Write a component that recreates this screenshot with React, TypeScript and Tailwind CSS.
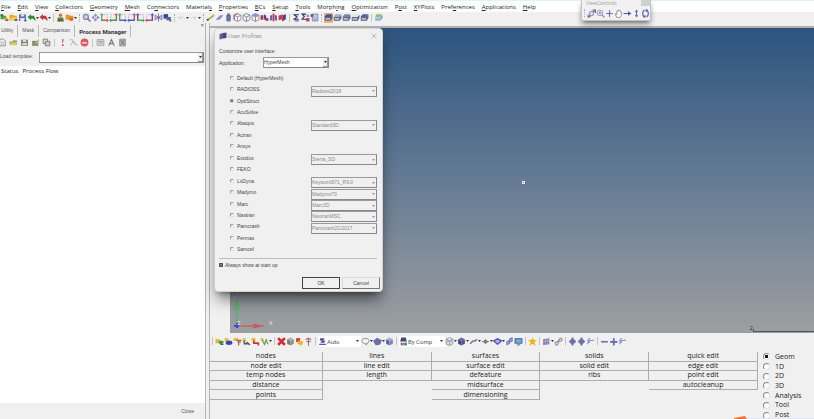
import React, { useState } from 'react';
import clsx from 'clsx';

const menus = [
  'File', 'Edit', 'View', 'Collectors', 'Geometry', 'Mesh', 'Connectors', 'Materials', 'Properties', 'BCs',
  'Setup', 'Tools', 'Morphing', 'Optimization', 'Post', 'XYPlots', 'Preferences', 'Applications', 'Help',
];

// letter that carries the keyboard shortcut, when it is not the first one
const accessKeys: Record<string, number> = { Connectors: 2, Materials: 8, Morphing: 5, Post: 1, Preferences: 4 };

const cube = (top: string, left: string, right: string) => (
  <>
    <path d="M8 1l6 3-6 3-6-3z" fill={top} />
    <path d="M2 4l6 3v8l-6-3z" fill={left} />
    <path d="M14 4L8 7v8l6-3z" fill={right} />
  </>
);

const wire = (color: string, mark?: string) => (
  <>
    <path d="M8 1l6 3v8l-6 3-6-3V4zM2 4l6 3 6-3M8 7v8" fill="#f6f6fa" stroke={color} strokeWidth="1.5" />
    {mark && <path d="M8 1L2 4v8" fill="none" stroke={mark} strokeWidth="2" />}
  </>
);

const axes = (a: string, b: string, flip?: boolean) => (
  <g fill="none" strokeWidth="2.5" transform={flip ? 'translate(16 0) scale(-1 1)' : undefined}>
    <path d="M3 2v12M1 4l2-2 2 2" stroke={a} />
    <path d="M3 13h11M12 11l2 2-2 2" stroke={b} />
    <path d="M6 3h7v6" stroke="#b9a0c8" strokeWidth="1.5" strokeDasharray="3 2" />
  </g>
);

const layers = (color: string) => (
  <>
    <path d="M1 6l4-4h10l-3 5H2z" fill={color} />
    <path d="M2 8h10v5H2z" fill="#b9bccb" stroke="#4c5378" strokeWidth="1.5" />
    <path d="M12 7l3-4v6l-3 4z" fill="#555d88" />
  </>
);

const comp = (a: string, b: string) => (
  <>
    <path d="M1 3h5l1 2h4v6H1z" fill={a} />
    <path d="M6 10l4-3 5 3-4 4z" fill={b} />
    <path d="M10 12h5v2h-5z" fill="#3b4273" />
  </>
);

const icons: Record<string, React.ReactNode> = {
  model: <>{comp('#4da04b', '#e6a325')}<path d="M1 2h4v4H1z" fill="#24803b" /></>,
  open: <><path d="M1 3h6l2 2h5v8H1z" fill="#e8a52b" /><path d="M4 7h11l-3 6H2z" fill="#f6c944" /><path d="M10 11h5v3h-5z" fill="#3f4d91" /></>,
  save: <><path d="M2 2h11l1 2v10H2z" fill="#5e68a7" /><path d="M5 2h6v4H5zM4 9h8v5H4z" fill="#e3e5f2" /><path d="M11 12h4v3h-4z" fill="#4b5798" /></>,
  import: <path d="M1 7l6-5v3h5l3 5v4l-4-4H7v3z" fill="#2d8a35" />,
  export: <path d="M1 7l6-5v3h5l3 5v4l-4-4H7v3z" fill="#c33432" />,
  user: <><circle cx="8" cy="4" r="3" fill="#c67a28" /><path d="M3 8h10v4H3z" fill="#448d3e" /><path d="M3 11h10l1 4H2z" fill="#6c5432" /></>,
  folder: <><path d="M1 3h6l2 2h6v7H1z" fill="#e39a2b" /><path d="M8 8h6v6H8z" fill="#e7672a" /></>,
  find: <><circle cx="7" cy="7" r="4.5" fill="#c9cce2" stroke="#84879d" strokeWidth="2" /><path d="M10 10l5 5" stroke="#6d708b" strokeWidth="2.5" /></>,
  center: <path d="M8 1l3 3-3 3-3-3zM8 9l3 3-3 3-3-3zM1 8l3-3 3 3-3 3zM9 8l3-3 3 3-3 3z" fill="#8e90cd" />,
  axGR: axes('#4eb657', '#d15460'),
  axGRf: axes('#cc5866', '#3da34b', true),
  axGB: axes('#42b352', '#5b5bc4'),
  axRB: axes('#c4505f', '#5656c4', true),
  axBG: axes('#5151c7', '#47af55'),
  axBR: axes('#574fc4', '#c74b62', true),
  iso: <><path d="M8 1v14M2 4l6 4 6-4M2 12l6-4 6 4M2 4v8M14 4v8" fill="none" stroke="#5a62ad" strokeWidth="1.5" /><path d="M5 8h6" stroke="#c14c5c" strokeWidth="2" /></>,
  views: <><path d="M1 2h8v8H1z" fill="#374983" /><path d="M6 7h8v6H6z" fill="#4769b0" /><path d="M11 12h4v3h-4z" fill="#c74040" /></>,
  undo: <path d="M2 8l4-4v3c4-1 7 0 8 5-2-3-4-3-8-2v3z" fill="#d9d9df" />,
  redo: <path d="M14 8l-4-4v3c-4-1-7 0-8 5 2-3 4-3 8-2v3z" fill="#d9d9df" />,
  lineY: <><path d="M2 13L14 4" stroke="#a2b038" strokeWidth="3" /><circle cx="3" cy="12" r="2" fill="#555" /><circle cx="13" cy="4" r="2" fill="#d2c425" /></>,
  plate: <path d="M1 12L9 4h6l-7 8z" fill="#8b8fc9" />,
  tank: <><rect x="4" y="3" width="8" height="12" rx="2" fill="#6b70a5" /><path d="M6 1h4v3H6z" fill="#4d5287" /></>,
  wireR: wire('#8a8a92', '#c55656'),
  wire: wire('#7d7e88'),
  wireB: <>{wire('#7b7da0')}<path d="M8 1l6 3-6 3-6-3z" fill="#8b92d8" /></>,
  solidR: <><path d="M1 4h5v8H1z" fill="#b63442" /><path d="M7 2l4 3v8l-4-2z" fill="#414791" /><path d="M10 9h5v5h-5z" fill="#c2323c" /></>,
  mirror: <><path d="M2 5l4-2v9l-4 2zM14 5l-4-2v9l4 2z" fill="#5b5fab" /><path d="M8 1v14" stroke="#cd3d44" strokeWidth="3" /></>,
  cubeR: <><path d="M1 5l7-3v9l-7 2z" fill="#cf3a46" /><path d="M8 4l6-2v9l-6 3z" fill="#414791" /><path d="M7 10l4-2v5l-4 2z" fill="#c2323c" /></>,
  sum: <><path d="M12 3H4l5 4-5 4h8" fill="none" stroke="#2f3566" strokeWidth="2" /><path d="M5 13h7v2H5z" fill="#5a62a9" /></>,
  sumR: <><path d="M9 2H2l4 4-4 5h7" fill="none" stroke="#2f3566" strokeWidth="2" /><path d="M9 9h6v6H9z" fill="#c14448" /><path d="M10 3h4v4h-4z" fill="#8288b8" /></>,
  report: <><path d="M4 2h10v12H4z" fill="#c8cbe2" stroke="#777db0" strokeWidth="1.5" /><path d="M1 2h5v5H1z" fill="#565c98" /><path d="M6 9h6M6 12h6" stroke="#777db0" /></>,
  layerA: layers('#3e5496'),
  layerB: layers('#a7abc2'),
  layerC: layers('#7b82ae'),
  layerD: layers('#e1e2ea'),
  layerE: layers('#50619d'),
  layerG: <><path d="M4 2h10l-2 5H2z" fill="#8ac56b" /><path d="M2 8h10v6H2z" fill="#9bb9dc" /><path d="M12 7l3-4v6l-3 4z" fill="#7390bd" /></>,
  zoomBox: <><path d="M3 14L13 4M2 10v4h4M10 2h5v5" fill="none" stroke="#666a85" strokeWidth="2" /><circle cx="8" cy="8" r="4" fill="#d9daee" stroke="#7b7eae" strokeWidth="1.5" /></>,
  zoomIn: <><circle cx="7" cy="7" r="5" fill="#e4e4f4" stroke="#8d8fae" strokeWidth="1.5" /><circle cx="7" cy="7" r="2" fill="#8d8fc0" /><path d="M11 11l4 4" stroke="#7779ac" strokeWidth="2" /></>,
  plusThin: <path d="M8 2v12M2 8h12" stroke="#6d6fb0" strokeWidth="2" />,
  hand: <path d="M5 15l-3-6 2-1 1 2V4h2v-2h2v1h2v2h2v6l-2 4z" fill="#fff" stroke="#85859a" strokeWidth="1.5" />,
  right: <path d="M1 7h8V4l6 4-6 4V9H1z" fill="#5257ad" />,
  updown: <path d="M8 1l3 4H9v6h2l-3 4-3-4h2V5H5z" fill="#6064bb" />,
  spin: <path d="M6 2C2 4 2 12 6 14M4 14h3v-3M10 2c4 2 4 10 0 12M12 2H9v3" fill="none" stroke="#4d52ae" strokeWidth="2" />,
  page: <><path d="M3 2h7l3 3v9H3z" fill="#eee" stroke="#8c8c8c" strokeWidth="1.5" /><path d="M5 8h6M5 11h6" stroke="#999" /></>,
  openS: <><path d="M1 6h5l1-2h7v8H1z" fill="#a2a184" /><path d="M4 8h11l-3 5H2z" fill="#d8cf59" /></>,
  saveS: <><path d="M2 3h12v11H2z" fill="#7c7e76" /><path d="M5 3h6v4H5zM4 9h8v4H4z" fill="#deded8" /></>,
  saveAs: <><path d="M2 5h11v9H2z" fill="#8c8e78" /><path d="M7 10l6-8 2 2-6 7z" fill="#c5bd50" /></>,
  copy: <><path d="M2 2h8v8H2z" fill="#ddd" stroke="#777" strokeWidth="1.5" /><path d="M6 6h8v8H6z" fill="#ccc" stroke="#777" strokeWidth="1.5" /></>,
  bang: <path d="M7 2h3l-1 7H8zM7 11h3v3H7z" fill="#d34a4f" />,
  steps: <path d="M2 3h4v4h4v4h4v3M3 13l5-7" fill="none" stroke="#a9a9bd" strokeWidth="1.5" />,
  stop: <><circle cx="8" cy="8" r="7" fill="#d95a5f" /><path d="M4 7h8v3H4z" fill="#f6dada" /></>,
  sheet: <><path d="M2 3h12v10H2z" fill="#e4e4e4" stroke="#999" strokeWidth="1.5" /><path d="M4 6h8M4 9h8" stroke="#888" strokeWidth="1.5" /></>,
  letter: <path d="M3 14L8 3l5 11M5 10h6" fill="none" stroke="#777" strokeWidth="2" />,
  pageX: <><path d="M3 2h10v12H3z" fill="#bbb" stroke="#888" strokeWidth="1.5" /><path d="M5 4l6 8M11 4l-6 8" stroke="#555" strokeWidth="1.5" /></>,
  compG: <>{comp('#e3bb24', '#48a54a')}<path d="M7 7h8v4H7z" fill="#3e9448" /></>,
  compB: <><path d="M1 2h7v6H1z" fill="#e9c02d" /><ellipse cx="9" cy="10" rx="6" ry="4" fill="#3748b5" /></>,
  compT: <><path d="M1 2h8v5H1z" fill="#efb62b" /><path d="M6 6h9M8 9h6M10 6v9" stroke="#a8603d" strokeWidth="2" /></>,
  compL: <><path d="M1 2h6v6H1z" fill="#e9c44a" /><path d="M4 6v6h9M8 9l6 5" fill="none" stroke="#575a5e" strokeWidth="2.5" /></>,
  compR: <><path d="M1 2h7v5H1z" fill="#eeb92a" /><path d="M5 6v5h8v4" fill="none" stroke="#ce382a" strokeWidth="3" /></>,
  compS: <><path d="M1 2h5v5H1z" fill="#e4c239" /><path d="M4 5l4 8 3-8 3 8" fill="none" stroke="#5f9a3b" strokeWidth="2" /></>,
  delete: <path d="M2 2l12 12M14 2L2 14" stroke="#d42b30" strokeWidth="5" />,
  gray: cube('#adadad', '#777', '#8f8f8f'),
  card: <><path d="M2 2h7v7H2z" fill="#d63b2a" /><path d="M6 6l9 2-3 7-8-3z" fill="#eeb32c" /></>,
  renum: <path d="M8 15V3M3 5l5-3 5 3M4 8h8" fill="none" stroke="#a36b6b" strokeWidth="2" />,
  auto: <><path d="M4 2h8l-3 4h4l-2 4H4l3-4H3z" fill="#46508f" /><path d="M2 12h12v2H2z" fill="#3c4583" /></>,
  balloon: <path d="M4 3h8l3 4-3 4H9l1 3-4-3H4L1 7z" fill="#fafafa" stroke="#7a7a86" strokeWidth="1.5" />,
  shade: <path d="M1 7l6-5 8 4-3 7-7 1z" fill="#6a70ae" stroke="#454b8c" />,
  cubeB: cube('#a9aed8', '#5d649e', '#8188bf'),
  byComp: <><path d="M4 1h8l2 7H2z" fill="#3f477f" /><path d="M3 10h3v5H3z" fill="#d9433c" /><path d="M6 10h4v5H6z" fill="#4cab48" /><path d="M10 10h4v5h-4z" fill="#4969cd" /></>,
  wireG: <>{wire('#90909a')}<path d="M2 8h12M5 2v12M11 2v12" stroke="#9a9aa4" /></>,
  cubeD: cube('#666ba4', '#3f4580', '#4d538f'),
  elem1: <path d="M2 12l5-5h4l3-3" fill="none" stroke="#76767c" strokeWidth="2.5" />,
  elem2: <path d="M1 8l5-2 2-3 2 3 5 2-5 2-2 3-2-3z" fill="#77777f" />,
  elem3: <path d="M1 7l7-4 7 4-7 6z" fill="#aaaef0" stroke="#4145b7" strokeWidth="2" />,
  elem4: <path d="M3 14V8l5-2v6zM8 9V3l5-2v7z" fill="#8f94cf" stroke="#585ea5" />,
  monitor: <><path d="M1 2h14v10H1z" fill="#476c9b" /><path d="M3 4h10v6H3z" fill="#65b2df" /><path d="M5 13h6v2H5z" fill="#777" /></>,
  star: <path d="M8 0l2 5.500h6l-4.500 3.500 2 7-5.500-4-5.500 4 2-7L0 5.500h6z" fill="#f1b51c" />,
  mesh: <><path d="M2 4l11-2v11L2 14z" fill="#7378a8" /><path d="M2 8l11-1M6 3v11M10 2v12" stroke="#d1d3e6" /></>,
  link: <path d="M2 10l4-2 2 2-2 4H3zM8 6l3-4 3 1v3l-4 2zM6 10l4-4" fill="none" stroke="#96969f" strokeWidth="2" />,
  globe: <><circle cx="8" cy="8" r="5" fill="#8a8ec0" /><path d="M8 1v14M2 8h12" stroke="#6268a2" strokeWidth="3" /></>,
  arc: <path d="M3 13C3 7 7 5 14 6M7 2L3 6l4 4" fill="none" stroke="#8488cc" strokeWidth="2" />,
  minus: <path d="M2 7h12v3H2z" fill="#7276b1" />,
  plus: <path d="M7 2h3v5h5v3h-5v5H7v-5H2V7h5z" fill="#6266ac" />,
};

// '|' is a divider, ':' a drag grip, 'v' a drop-down arrow
const fileBar = 'model open save import v export v | user folder v : find center axGR axGRf axGB axRB axBG axBR iso views : undo v redo v : lineY plate tank wireR wire wireB solidR mirror cubeR | sum sumR report : layerA layerB layerC layerD layerE | layerG';
const processBar = 'page openS saveS saveAs copy | bang steps stop | sheet letter pageX';
const viewBar = ': zoomBox zoomIn plusThin hand right updown spin';

const columns = [
  ['nodes', 'node edit', 'temp nodes', 'distance', 'points'],
  ['lines', 'line edit', 'length'],
  ['surfaces', 'surface edit', 'defeature', 'midsurface', 'dimensioning'],
  ['solids', 'solid edit', 'ribs'],
  ['quick edit', 'edge edit', 'point edit', 'autocleanup'],
];

const pages = ['Geom', '1D', '2D', '3D', 'Analysis', 'Tool', 'Post'];

const profiles: { name: string; version?: string }[] = [
  { name: 'Default (HyperMesh)' },
  { name: 'RADIOSS', version: 'Radioss2018' },
  { name: 'OptiStruct' },
  { name: 'AcuSolve' },
  { name: 'Abaqus', version: 'Standard3D' },
  { name: 'Actran' },
  { name: 'Ansys' },
  { name: 'Exodus', version: 'Sierra_SD' },
  { name: 'FEKO' },
  { name: 'LsDyna', version: 'Keyword971_R9.0' },
  { name: 'Madymo', version: 'Madymo70' },
  { name: 'Marc', version: 'Marc3D' },
  { name: 'Nastran', version: 'NastranMSC' },
  { name: 'Pamcrash', version: 'Pamcrash2G2017' },
  { name: 'Permas' },
  { name: 'Samcef' },
];

function Icon({ name }: { name: string }) {
  return (
    <svg viewBox="0 0 16 16" className="h-[9px] w-[9px] shrink-0" aria-hidden="true">
      {icons[name]}
    </svg>
  );
}

function Caret({ muted }: { muted?: boolean }) {
  return (
    <svg viewBox="0 0 6 4" className="h-[2px] w-[3px] shrink-0" aria-hidden="true">
      <path d="M0 0h6L3 4z" fill={muted ? '#999' : '#333'} />
    </svg>
  );
}

function Tools({ items, wide }: { items: string; wide?: boolean }) {
  return (
    <div className="flex items-center">
      {items.split(' ').map((item, i) => {
        if (item === '|') return <span key={i} className="mx-[2px] h-2 w-px bg-[#c4c4c4]" />;
        if (item === ':') return <span key={i} className="mx-[2px] h-2 border-l border-dotted border-[#a8a8a8]" />;
        if (item === 'v') return <span key={i} className="flex w-[3px]"><Caret /></span>;
        return (
          <button
            key={i}
            type="button"
            aria-label={item}
            className={clsx('flex h-[10px] items-center justify-center', wide ? 'w-[11px]' : 'w-[9px]', item === 'layerA' && 'bg-[#f3b27c]')}
          >
            <Icon name={item} />
          </button>
        );
      })}
    </div>
  );
}

function Select({ label, value, disabled, className }: { label: string; value: string; disabled?: boolean; className?: string }) {
  return (
    <div className={clsx('relative flex h-[11px] border border-[#9a9a9a] border-r-[#888] border-b-[#888]', disabled ? 'bg-[#f0f0f0]' : 'bg-white', className)}>
      <select
        aria-label={label}
        disabled={disabled}
        className={clsx('w-full appearance-none bg-transparent leading-[9px] opacity-100 outline-none', disabled ? 'text-[#8a8a8a]' : 'text-[#444]')}
      >
        <option>{value}</option>
      </select>
      <span className={clsx('pointer-events-none absolute inset-y-0 right-0 flex w-[5px] items-center justify-center bg-[#f0f0f0]', !disabled && 'border-r border-b border-[#999]')}>
        <Caret muted={disabled} />
      </span>
    </div>
  );
}

function DisplaySelect({ icon, value, className }: { icon: string; value: string; className: string }) {
  return (
    <div className={clsx('flex h-[11px] items-center bg-white pr-[2px]', className)}>
      <Icon name={icon} />
      <select aria-label={value} className="min-w-0 flex-1 appearance-none bg-transparent font-['Roboto',sans-serif] text-[6px] leading-[11px] text-[#555] outline-none">
        <option>{value}</option>
      </select>
      <Caret />
    </div>
  );
}

function MenuBar() {
  return (
    <nav className="flex h-[11px] max-w-[536px] items-center justify-between pl-px text-[6px] leading-[10px] text-[#222]">
      {menus.map((menu) => {
        const k = accessKeys[menu] ?? 0;
        return (
          <button key={menu} type="button" className="whitespace-nowrap">
            {menu.slice(0, k)}
            <u>{menu[k]}</u>
            {menu.slice(k + 1)}
          </button>
        );
      })}
    </nav>
  );
}

function ProcessPanel() {
  const tabs = ['Utility', 'Mask', 'Comparison', 'Process Manager'];
  return (
    <aside className="flex w-[206px] shrink-0 flex-col border-r border-[#b4b4b4] font-['Liberation_Sans',sans-serif] text-[5px] text-[#555]">
      <div className="-ml-[3px] flex h-[14px] items-end">
        {tabs.map((tab) => (
          <button
            key={tab}
            type="button"
            className={clsx('h-[12px] border-r border-[#b8b8b8] px-[4px]', tab === 'Process Manager' && "font-['Roboto',sans-serif] text-[6px] font-bold text-[#333]")}
          >
            {tab}
          </button>
        ))}
        <button type="button" aria-label="Close panel" className="mr-px ml-auto self-start text-[6px] leading-[5px]">×</button>
      </div>
      <div className="-ml-[3px] flex h-[11px] items-center"><Tools items={processBar} wide /></div>
      <div className="flex h-[18px] items-center gap-[6px] pr-px">
        <span>Load template:</span>
        <Select label="Load template" value="" className="flex-1" />
      </div>
      <div className="flex flex-1 flex-col bg-white">
        <div className="flex gap-1 pl-px font-['Open_Sans',sans-serif] text-[6px] leading-[10px] text-[#222]">
          <span>Status</span>
          <span>Process Flow</span>
        </div>
      </div>
      <div className="flex h-[16px] items-center justify-end pt-[2px] pr-[11px]">
        <button type="button">Close</button>
      </div>
    </aside>
  );
}

function GraphicsArea() {
  return (
    <div className="flex flex-1 border-t-2 border-[#b0b0b0] pl-[20px]">
      <div className="relative flex-1 bg-linear-to-b from-[#2c547f] via-[#657b94] to-[#9d9f9f]">
        <svg viewBox="0 0 48 44" className="absolute bottom-0 left-0 h-[44px] w-[48px]" aria-label="Axis triad">
          <path d="M7 36V20M5 20l2-9 2 9z" fill="none" stroke="#36c24c" />
          <path d="M7 37h27M24 35l6 2-6 2z" fill="none" stroke="#da4545" />
          <path d="M4 37h5M7 34v5" stroke="#3d48dc" strokeWidth="2" />
          <text x="39" y="36" fontSize="6" fill="#f0f0f0">X</text>
          <text x="7" y="36" fontSize="6" fill="#f0f0f0">Z</text>
          <text x="6" y="5" fontSize="6" fill="#cfcfcf">Y</text>
        </svg>
        <span className="absolute top-1/2 left-1/2 h-[3px] w-[3px] border border-[#e6edf3]" />
        <div className="absolute right-0 bottom-px flex items-end text-[6px] leading-[8px] text-[#333]">
          2
          <span className="h-[3px] w-[61px] border-b border-l border-[#555]" />
        </div>
      </div>
    </div>
  );
}

function PageMenu() {
  const [page, setPage] = useState('Geom');

  return (
    <div className="flex flex-1 pt-[3px] text-[7px] text-[#222]">
      <div className="grid h-[48px] flex-1 grid-cols-[113fr_109fr_109fr_109fr_109fr]">
        {columns.map((items) => (
          <div key={items[0]} className="grid grid-rows-5">
            {items.map((item) => (
              <button key={item} type="button" className="min-h-0 border-r border-b border-[#adadad] leading-[8px]">
                {item}
              </button>
            ))}
          </div>
        ))}
      </div>
      <fieldset className="grid h-[68px] w-[56px] grid-rows-7 pl-[5px]">
        {pages.map((p) => (
          <label key={p} className="flex min-h-0 items-center gap-[5px] leading-[8px]">
            <input
              type="radio"
              name="page"
              checked={page === p}
              onChange={() => setPage(p)}
              className="h-[7px] w-[7px] appearance-none rounded-full border border-[#8a8a8a] border-r-[#e4e4e4] border-b-[#e4e4e4] bg-white checked:bg-radial checked:from-[#111] checked:from-40% checked:to-white checked:to-50%"
            />
            {p}
          </label>
        ))}
      </fieldset>
    </div>
  );
}

function UserProfiles() {
  const [profile, setProfile] = useState('OptiStruct');

  return (
    <div role="dialog" aria-label="User Profiles" className="absolute top-[28px] left-[214px] w-[169px] rounded-[4px] border border-[#d2d2d2] bg-[#f0f0f0] px-[2px] pb-[2px] font-['Liberation_Sans',sans-serif] text-[5px] leading-[8px] text-[#444] shadow-lg shadow-black/50">
      <div className="pr-[3px] pl-[2px]">
        <div className="flex h-[13px] items-center gap-px font-['Roboto',sans-serif] text-[6px] text-[#999]">
          <svg viewBox="0 0 16 16" className="h-2 w-2" aria-hidden="true">
            <path d="M1 4l7-2v11l-7 2z" fill="#5c5f91" />
            <path d="M8 2l7-1v11l-7 1z" fill="#45487c" />
          </svg>
          User Profiles
          <button type="button" aria-label="Close" className="ml-auto">
            <svg viewBox="0 0 12 12" className="h-[6px] w-[6px]"><path d="M1 1l10 10M11 1L1 11" stroke="#888" /></svg>
          </button>
        </div>
        <p className="mt-[5px]">Customize user interface:</p>
        <div className="mt-[2px] flex items-center">
          <span className="w-[44px]">Application:</span>
          <Select label="Application" value="HyperMesh" className="w-[66px]" />
        </div>
        <div className="mt-[4px] grid h-[183px] auto-rows-fr">
          {profiles.map(({ name, version }) => (
            <div key={name} className="flex min-h-0 items-center justify-between pl-[11px]">
              <label className="flex items-center gap-[3px]">
                <input
                  type="radio"
                  name="profile"
                  checked={profile === name}
                  onChange={() => setProfile(name)}
                  className="h-[4px] w-[4px] appearance-none rounded-full border border-[#888] border-r-[#ddd] border-b-[#ddd] bg-white checked:bg-[#777]"
                />
                {name}
              </label>
              {version && <Select label={name + ' version'} value={version} disabled className="mt-[4px] w-[66px]" />}
            </div>
          ))}
        </div>
        <hr className="mt-[3px] border-[#c0c0c0]" />
        <label className="mt-[2px] flex items-center gap-[2px]">
          <input type="checkbox" defaultChecked className="h-[4px] w-[4px] appearance-none border border-[#555] bg-white checked:bg-[#777]" />
          Always show at start up
        </label>
      </div>
      <div className="mt-[8px] flex justify-end gap-[2px]">
        <button type="button" className="h-[12px] w-[38px] border border-[#444]">OK</button>
        <button type="button" className="h-[12px] w-[38px] border border-[#ddd] border-r-[#777] border-b-[#777]">Cancel</button>
      </div>
    </div>
  );
}

export default function App() {
  return (
    <div className="relative flex h-screen flex-col overflow-hidden bg-[#f0f0f0] font-['Open_Sans',sans-serif]">
      <header className="border-t border-[#def5f5] bg-white"><MenuBar /></header>
      <div className="flex h-[11px] items-center"><Tools items={fileBar} /></div>

      <div className="flex min-h-0 flex-1">
        <ProcessPanel />
        <main className="ml-[3px] flex min-w-0 flex-1 flex-col border-l border-[#b4b4b4] pt-[3px]">
          <GraphicsArea />
          <div className="flex h-[16px] items-center">
            <Tools items="| compG compB compT compL compR compS v | delete gray card renum |" />
            <DisplaySelect icon="auto" value="Auto" className="w-[43px]" />
            <Tools items="balloon v shade v cubeB |" />
            <DisplaySelect icon="byComp" value="By Comp" className="w-[46px]" />
            <Tools items="wireG v cubeD v elem1 v elem2 v elem3 v elem4 monitor | star | mesh v link | globe globe arc | minus plus arc" />
          </div>
          <div className="flex h-[70px]"><PageMenu /></div>
        </main>
      </div>

      <UserProfiles />

      <div className="absolute top-0 left-[581px] w-[70px] rounded-b-[2px] border border-t-0 border-[#c4c4c4] bg-[#f1f1f1] shadow-md shadow-black/40">
        <div className="flex h-[6px] items-start justify-between pl-[4px] text-[5px] leading-[6px] text-[#999]">
          ViewControls
          <button type="button" aria-label="Close ViewControls" className="h-[6px] w-[9px] bg-[#d0d0d0]" />
        </div>
        <div className="flex h-[14px] items-center"><Tools items={viewBar} /></div>
      </div>

      <svg viewBox="0 0 80 3" className="absolute right-0 bottom-0 h-[3px] w-[80px]" aria-hidden="true">
        <path d="M12 2h68v1H12z" fill="#e2e3f6" />
        <path d="M0 2l11-2 2 3H0z" fill="#f0703f" />
      </svg>
    </div>
  );
}
